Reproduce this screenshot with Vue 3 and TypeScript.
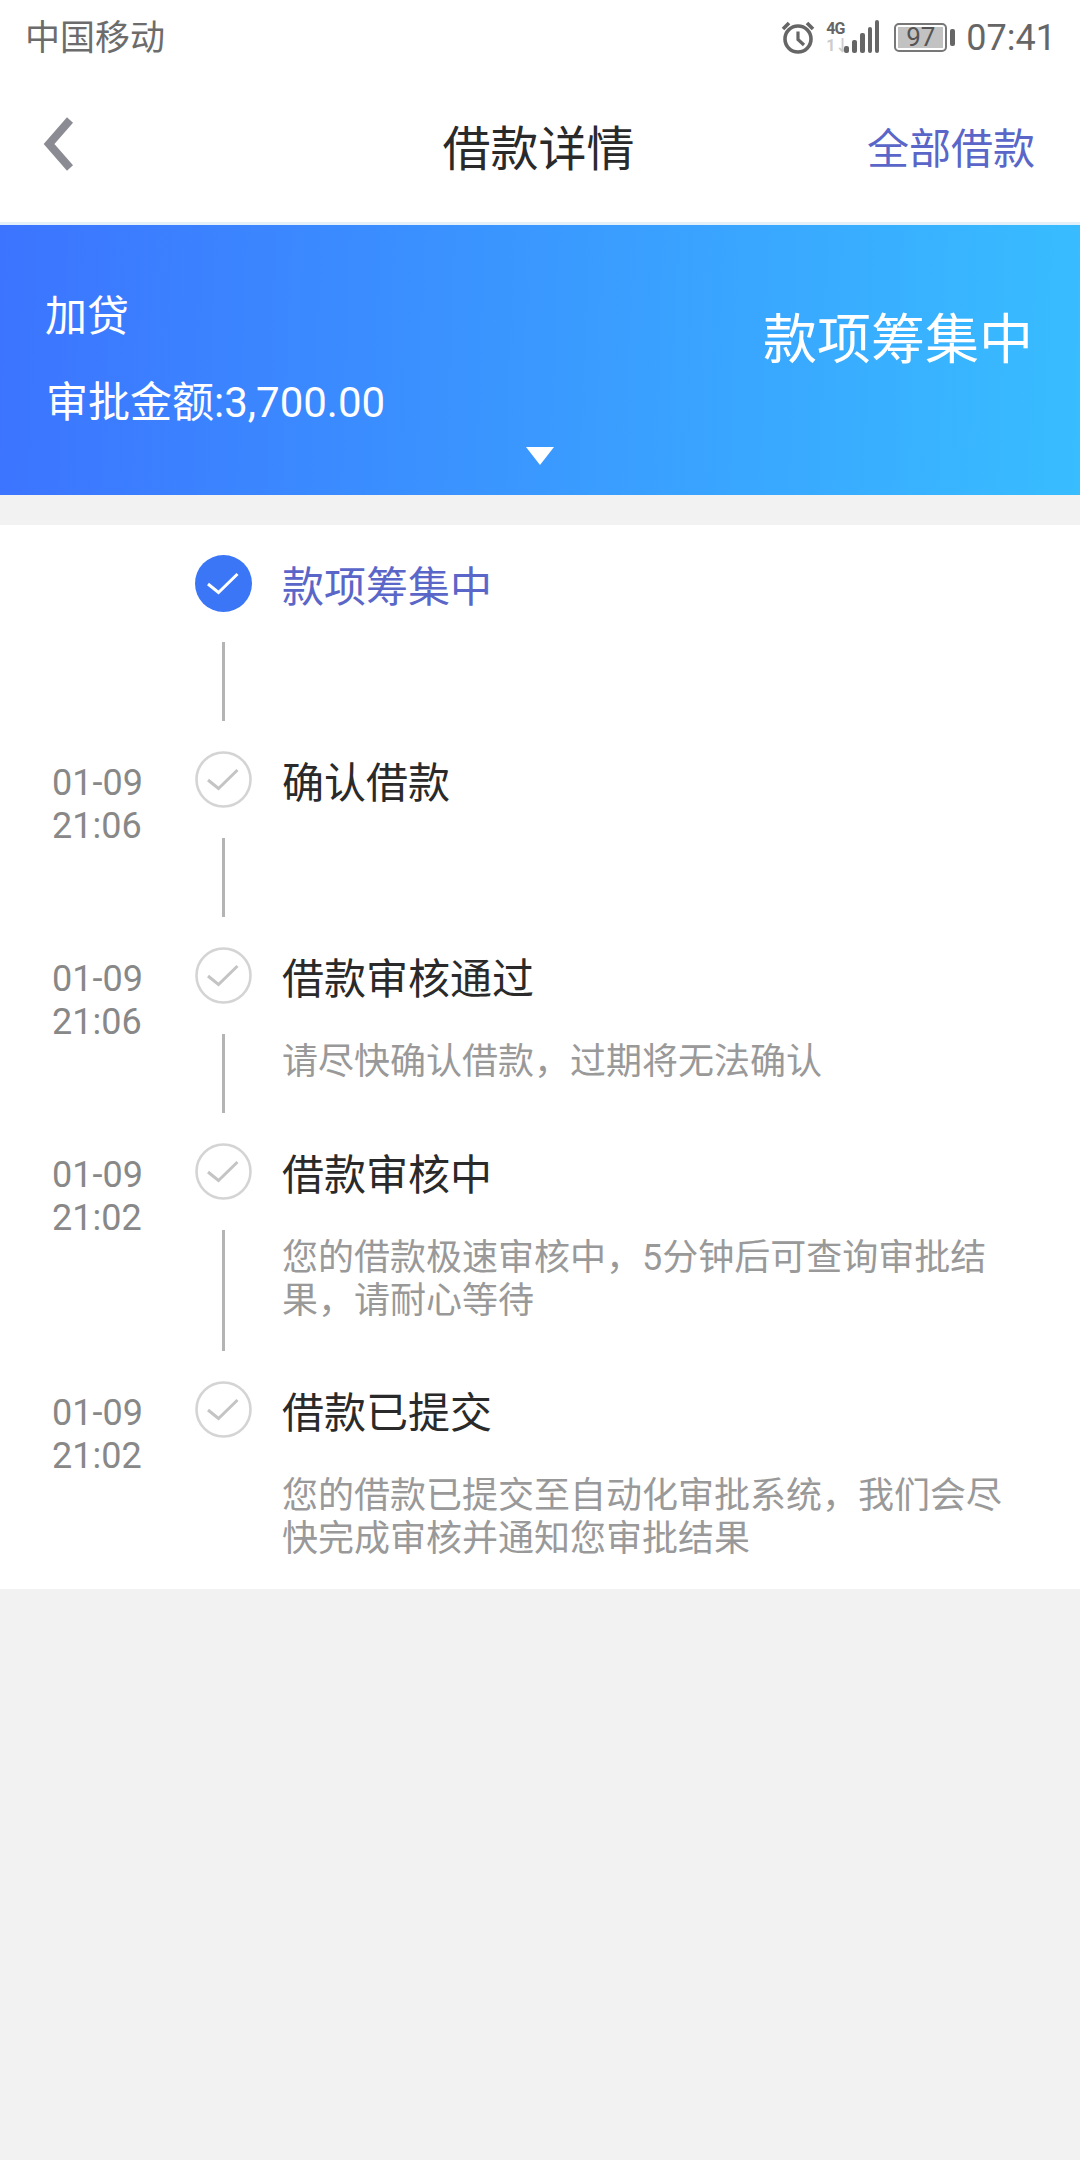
<script setup lang="ts">
interface Step {
  date?: string
  time?: string
  title: string
  lines?: string
  active?: boolean
}

const steps: Step[] = [
  { title: '款项筹集中', active: true },
  { date: '01-09', time: '21:06', title: '确认借款' },
  { date: '01-09', time: '21:06', title: '借款审核通过', lines: '请尽快确认借款，过期将无法确认' },
  { date: '01-09', time: '21:02', title: '借款审核中', lines: '您的借款极速审核中，5分钟后可查询审批结果，请耐心等待' },
  { date: '01-09', time: '21:02', title: '借款已提交', lines: '您的借款已提交至自动化审批系统，我们会尽快完成审核并通知您审批结果' }
]
</script>

<template>
  <div class="page">
    <header class="status">
      <span class="carrier">中国移动</span>
      <div class="status-right">
        <svg class="alarm" width="34" height="34" viewBox="0 0 34 34" fill="none" stroke="#666">
          <circle cx="17" cy="19" r="13" stroke-width="3.6" />
          <path d="M17 11.5V19.5L23 25" stroke-width="3.2" />
          <path d="M2 9L8 3M32 9L26 3" stroke-width="3.6" />
        </svg>
        <div class="net">
          <span class="net-g">4G</span>
          <span class="net-h">1↓</span>
        </div>
        <svg class="bars" width="36" height="34" viewBox="0 0 36 34" fill="#666">
          <rect x="0" y="26" width="5" height="7" rx="2" />
          <rect x="8" y="20" width="5" height="13" rx="2" />
          <rect x="16" y="13" width="5" height="20" rx="2" />
          <rect x="24" y="7" width="4" height="26" rx="2" />
          <rect x="31" y="0" width="4" height="33" rx="2" />
        </svg>
        <div class="battery">
          <span class="battery-body"><span class="battery-fill">97</span></span>
          <span class="battery-nub"></span>
        </div>
        <span class="clock">07:41</span>
      </div>
    </header>

    <nav class="nav">
      <div class="nav-left">
        <svg class="back" width="32" height="54" viewBox="0 0 32 54" fill="none">
          <path d="M27 3L6 27L27 51" stroke="#8b8b93" stroke-width="8" />
        </svg>
      </div>
      <h1 class="nav-title">借款详情</h1>
      <div class="nav-right">全部借款</div>
    </nav>

    <section class="banner">
      <div class="banner-left">
        <div class="loan-type">加贷</div>
        <div class="loan-amount">审批金额:3,700.00</div>
      </div>
      <div class="banner-status">款项筹集中</div>
      <span class="caret"></span>
    </section>

    <section class="card">
      <div v-for="(s, i) in steps" :key="i" class="step">
        <div class="stamp">
          <div>{{ s.date }}</div>
          <div>{{ s.time }}</div>
        </div>
        <div class="rail">
          <svg class="dot" width="57" height="57" viewBox="0 0 57 57">
            <template v-if="s.active">
              <circle cx="28.5" cy="28.5" r="28.5" fill="#3b76f6" />
              <path d="M13 29L23.5 37.5L42.5 19" fill="none" stroke="#fff" stroke-width="3" />
            </template>
            <template v-else>
              <circle cx="28.5" cy="28.5" r="27" fill="#fff" stroke="#d4d4d4" stroke-width="2.6" />
              <path d="M13 29L23.5 37.5L42.5 19" fill="none" stroke="#c4c4c4" stroke-width="3" />
            </template>
          </svg>
          <span v-if="i < steps.length - 1" class="line"></span>
        </div>
        <div class="body">
          <div class="title" :class="{ 'title-active': s.active }">{{ s.title }}</div>
          <div v-if="s.lines" class="desc">{{ s.lines }}</div>
        </div>
      </div>
    </section>
  </div>
</template>

<style scoped>
.page {
  min-height: 2160px;
  background: #f2f2f3;
  font-family: Roboto, "Noto Sans CJK SC", sans-serif;
}
.status {
  height: 74px;
  background: #fff;
  display: flex;
  align-items: center;
  justify-content: space-between;
  padding: 0 24px 0 25px;
  color: #666;
}
.carrier {
  padding-top: 3px;
  font-size: 35px;
  line-height: 71px;
  color: #6c6c6c;
}
.status-right {
  display: flex;
  align-items: center;
}
.alarm {
  margin-right: 11px;
}
.net {
  width: 18px;
  display: flex;
  flex-direction: column;
  font-size: 16px;
  line-height: 17px;
  font-weight: 700;
  letter-spacing: -1px;
  white-space: nowrap;
}
.net-g {
  color: #666;
}
.net-h {
  color: #ccc;
}
.bars {
  margin-right: 14px;
}
.battery {
  display: flex;
  align-items: center;
  margin-right: 11px;
}
.battery-body {
  box-sizing: border-box;
  width: 53px;
  height: 29px;
  border: 2px solid #777;
  border-radius: 5px;
  padding: 2px;
  display: flex;
}
.battery-fill {
  flex: 1;
  background: #c2c2c2;
  color: #555;
  font-size: 26px;
  line-height: 21px;
  text-align: center;
}
.battery-nub {
  width: 5px;
  height: 17px;
  margin-left: 3px;
  background: #666;
  border-radius: 2px;
}
.clock {
  padding-top: 2px;
  font-size: 36px;
  line-height: 72px;
}
.nav {
  height: 148px;
  background: #fff;
  border-bottom: 3px solid #e3f0fa;
  display: grid;
  grid-template-columns: 1fr auto 1fr;
  align-items: center;
  padding: 0 45px 0 43px;
}
.nav-left {
  display: flex;
  align-items: center;
  padding-bottom: 8px;
}
.nav-title {
  margin: 3px 0 0 -1px;
  font-size: 48px;
  font-weight: 400;
  color: #2a2a2a;
  line-height: 60px;
}
.nav-right {
  margin-top: 3px;
  text-align: right;
  font-size: 42px;
  line-height: 60px;
  color: #5a66c8;
}
.banner {
  position: relative;
  height: 270px;
  display: flex;
  justify-content: space-between;
  padding: 0 47px 0 45px;
  background: linear-gradient(92deg, #3c74ff 0%, #38bdff 100%);
  color: #fff;
}
.banner-left {
  padding-top: 62px;
}
.loan-type {
  font-size: 42px;
  line-height: 60px;
}
.loan-amount {
  margin-top: 26px;
  margin-left: 1px;
  font-size: 42px;
  line-height: 60px;
}
.banner-status {
  padding-top: 76px;
  font-size: 54px;
  line-height: 80px;
}
.caret {
  position: absolute;
  left: 526px;
  top: 222px;
  width: 0;
  height: 0;
  border-left: 14px solid transparent;
  border-right: 14px solid transparent;
  border-top: 18px solid #fff;
}
.card {
  margin-top: 30px;
  padding-top: 30px;
  background: #fff;
}
.step {
  display: flex;
  min-height: 196px;
}
.stamp {
  box-sizing: border-box;
  width: 195px;
  padding: 11px 0 0 52px;
  font-size: 36px;
  line-height: 43px;
  color: #888;
}
.rail {
  width: 57px;
  display: flex;
  flex-direction: column;
  align-items: center;
}
.dot {
  flex: none;
  display: block;
}
.line {
  flex: 1;
  width: 3px;
  margin: 30px 0;
  background: #b4b4b4;
}
.body {
  width: 730px;
  margin-left: 30px;
  padding-bottom: 58px;
}
.step:last-child .body {
  padding-bottom: 28px;
}
.title {
  margin-top: 3px;
  font-size: 42px;
  line-height: 60px;
  color: #2a2a2a;
}
.title-active {
  color: #5a66c8;
}
.desc {
  margin-top: 31px;
  font-size: 36px;
  line-height: 43px;
  color: #999;
}
</style>

<style>
body {
  background: #f2f2f3;
}
</style>
